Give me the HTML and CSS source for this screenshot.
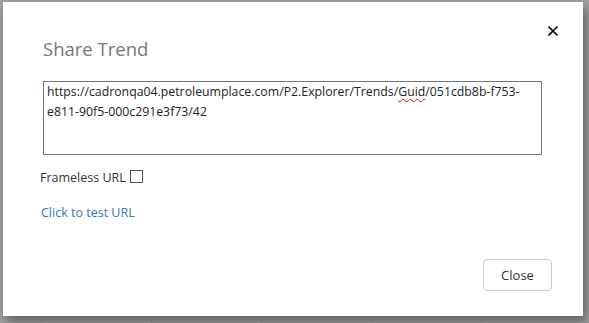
FILE: index.html
```html
<!DOCTYPE html>
<html lang="en">

<head>
    <meta charset="UTF-8">
    <meta name="viewport" content="width=device-width, initial-scale=1.0">
    <title>Share Trend</title>
    <link rel="stylesheet" href="styles.css">
</head>

<body>
    <div class="modal">
        <div class="modal-header">
            <h4 class="modal-title">Share Trend</h4>
            <button class="close" type="button" aria-label="Close">
                <svg width="12" height="12" viewBox="0 0 12 12">
                    <path d="M1.5 1.5 L10.5 10.5 M10.5 1.5 L1.5 10.5" stroke="#000" stroke-width="1.7" fill="none" />
                </svg>
            </button>
        </div>
        <div class="modal-body">
            <div class="url-box">https://cadronqa04.petroleumplace.com/P2.Explorer/Trends/<span class="typo">Guid</span>/051cdb8b-f753-<br>e811-90f5-000c291e3f73/42</div>
            <label class="frameless">Frameless URL <span class="check"></span></label>
            <a href="#" class="test-link">Click to test URL</a>
        </div>
        <div class="modal-footer">
            <button class="btn" type="button">Close</button>
        </div>
    </div>
</body>

</html>
```

FILE: styles.css
```css
html,
body {
    height: 100%;
    margin: 0;
}

body {
    background-color: #a0a0a0;
    background-image: repeating-linear-gradient(90deg, transparent 0, transparent 41px, #939393 41px, #939393 42px, transparent 42px, transparent 110px);
    padding: 2px 6px 0 3px;
    box-sizing: border-box;
    font-family: "Open Sans", "Noto Sans", sans-serif;
    color: #333;
}

.modal {
    width: 580px;
    height: 314px;
    background: #fff;
    box-shadow: 3px 6px 10px rgba(0, 0, 0, 0.4);
    display: flex;
    flex-direction: column;
    padding: 0 41px 0 40px;
    box-sizing: border-box;
}

.modal-header {
    display: flex;
    justify-content: space-between;
    align-items: flex-start;
    padding-top: 30px;
}

.modal-title {
    margin: 0;
    font-size: 18.5px;
    font-weight: normal;
    line-height: 34px;
    color: #777;
}

.close {
    border: 0;
    background: none;
    padding: 0;
    margin: -7px -17px 0 0;
    width: 12px;
    height: 12px;
    cursor: pointer;
}

.close svg {
    display: block;
}

.modal-body {
    display: flex;
    flex-direction: column;
    align-items: flex-start;
    margin-top: 15px;
}

.url-box {
    width: 499px;
    height: 74px;
    box-sizing: border-box;
    border: 1px solid #767676;
    padding: 0 3px;
    font-size: 12.3px;
    line-height: 20px;
    color: #222;
    white-space: nowrap;
    overflow: hidden;
}

.typo {
    text-decoration: underline wavy #e00;
    text-decoration-thickness: 1px;
    text-underline-offset: 2px;
}

.frameless {
    margin: 13px 0 0 -3px;
    font-size: 12.5px;
    line-height: 20px;
    display: flex;
    align-items: center;
    gap: 4px;
    color: #333;
}

.check {
    width: 11px;
    height: 11px;
    border: 1px solid #555;
    display: inline-block;
    margin-top: -3px;
}

.test-link {
    margin: 15px 0 0 -2px;
    font-size: 12.5px;
    line-height: 20px;
    color: #337ab7;
    text-decoration: none;
}

.modal-footer {
    margin-top: auto;
    margin-right: -10px;
    padding-bottom: 25px;
    display: flex;
    justify-content: flex-end;
}

.btn {
    width: 69px;
    height: 32px;
    border: 1px solid #ccc;
    border-radius: 4px;
    background: #fff;
    font-family: inherit;
    font-size: 13px;
    color: #333;
}
```
